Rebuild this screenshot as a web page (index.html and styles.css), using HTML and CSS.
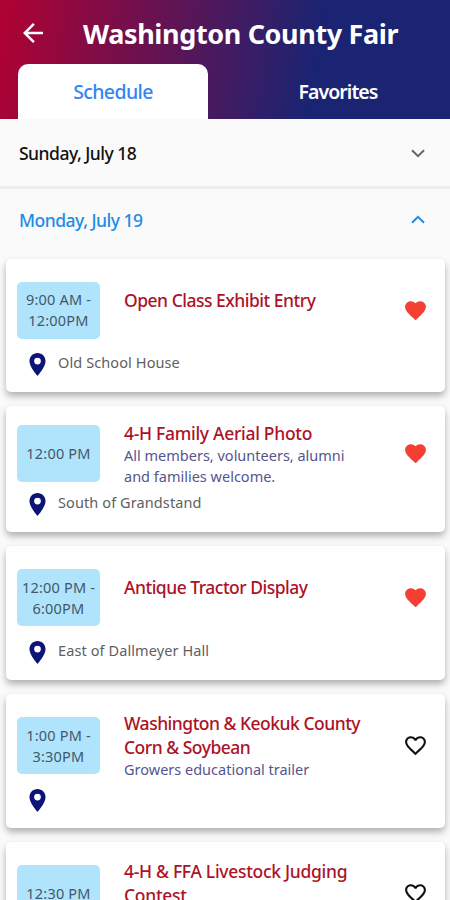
FILE: index.html
```html
<!DOCTYPE html>
<html lang="en">
<head>
    <meta charset="UTF-8">
    <meta name="viewport" content="width=device-width, initial-scale=1.0">
    <title>Washington County Fair</title>
    <link rel="stylesheet" href="styles.css">
</head>
<body>
    <!-- Icons shared by the event cards -->
    <svg class="sprite" width="0" height="0">
        <symbol id="pin" viewBox="5 2 14 20">
            <path d="M12 2C8.13 2 5 5.13 5 9c0 5.25 7 13 7 13s7-7.75 7-13c0-3.87-3.13-7-7-7zm0 9.9a2.9 2.9 0 0 1 0-5.8 2.9 2.9 0 0 1 0 5.8z"/>
        </symbol>
        <symbol id="heart" viewBox="0 0 24 24">
            <path d="M12 21.35l-1.45-1.32C5.4 15.36 2 12.28 2 8.5 2 5.42 4.42 3 7.5 3c1.74 0 3.41.81 4.5 2.09C13.09 3.81 14.76 3 16.5 3 19.58 3 22 5.42 22 8.5c0 3.78-3.4 6.86-8.55 11.54L12 21.35z"/>
        </symbol>
        <symbol id="heart-outline" viewBox="0 0 24 24">
            <path d="M16.5 3c-1.74 0-3.41.81-4.5 2.09C10.91 3.81 9.24 3 7.5 3 4.42 3 2 5.42 2 8.5c0 3.78 3.4 6.86 8.55 11.54L12 21.35l1.45-1.32C18.6 15.36 22 12.28 22 8.5 22 5.42 19.58 3 16.5 3zm-4.4 15.55l-.1.1-.1-.1C7.14 14.24 4 11.39 4 8.5 4 6.5 5.5 5 7.5 5c1.54 0 3.04.99 3.57 2.36h1.87C13.46 5.99 14.96 5 16.5 5c2 0 3.5 1.5 3.5 3.5 0 2.89-3.14 5.74-7.9 10.05z"/>
        </symbol>
    </svg>

    <header class="header">
        <div class="title-bar">
            <svg class="back" viewBox="4 4 16 16"><path d="M20 11H7.83l5.59-5.59L12 4l-8 8 8 8 1.41-1.41L7.83 13H20v-2z"/></svg>
            <h1>Washington County Fair</h1>
        </div>
        <nav class="tabs">
            <a class="tab active">Schedule</a>
            <a class="tab">Favorites</a>
        </nav>
    </header>

    <div class="day">
        <span class="day-name">Sunday, July 18</span>
        <svg class="chevron" viewBox="0 0 14 9"><path d="M1 1.2l6 6 6-6"/></svg>
    </div>
    <div class="day open">
        <span class="day-name">Monday, July 19</span>
        <svg class="chevron" viewBox="0 0 14 9"><path d="M1 7.8l6-6 6 6"/></svg>
    </div>

    <main class="events">
        <div class="card first">
            <div class="info">
                <div class="time">9:00 AM -<br>12:00PM</div>
                <div class="details">
                    <h2>Open Class Exhibit Entry</h2>
                    <p></p>
                </div>
                <svg class="fav on"><use href="#heart"/></svg>
            </div>
            <div class="location">
                <svg class="pin"><use href="#pin"/></svg>
                <span class="place">Old School House</span>
            </div>
        </div>

        <div class="card compact">
            <div class="info">
                <div class="time">12:00 PM</div>
                <div class="details">
                    <h2 class="wide">4-H Family Aerial Photo</h2>
                    <p>All members, volunteers, alumni<br>and families welcome.</p>
                </div>
                <svg class="fav on"><use href="#heart"/></svg>
            </div>
            <div class="location">
                <svg class="pin"><use href="#pin"/></svg>
                <span class="place">South of Grandstand</span>
            </div>
        </div>

        <div class="card">
            <div class="info">
                <div class="time">12:00 PM -<br>6:00PM</div>
                <div class="details">
                    <h2>Antique Tractor Display</h2>
                    <p></p>
                </div>
                <svg class="fav on"><use href="#heart"/></svg>
            </div>
            <div class="location">
                <svg class="pin"><use href="#pin"/></svg>
                <span class="place">East of Dallmeyer Hall</span>
            </div>
        </div>

        <div class="card">
            <div class="info">
                <div class="time">1:00 PM -<br>3:30PM</div>
                <div class="details">
                    <h2>Washington &amp; Keokuk County<br>Corn &amp; Soybean</h2>
                    <p>Growers educational trailer</p>
                </div>
                <svg class="fav"><use href="#heart-outline"/></svg>
            </div>
            <div class="location">
                <svg class="pin"><use href="#pin"/></svg>
            </div>
        </div>

        <div class="card">
            <div class="info">
                <div class="time">12:30 PM</div>
                <div class="details">
                    <h2 class="wide">4-H &amp; FFA Livestock Judging<br>Contest</h2>
                    <p></p>
                </div>
                <svg class="fav"><use href="#heart-outline"/></svg>
            </div>
            <div class="location">
                <svg class="pin"><use href="#pin"/></svg>
            </div>
        </div>
    </main>
</body>
</html>
```
FILE: styles.css
```css
* {
    margin: 0;
    padding: 0;
    box-sizing: border-box;
}

body {
    height: 900px;
    overflow: hidden;
    background-color: #fafafa;
    font-family: 'Noto Sans', sans-serif;
}

.sprite {
    display: block;
}

.header {
    height: 119px;
    background: linear-gradient(100deg, #ad0233 2%, #1b2472 69%);
    color: #fff;
}

.title-bar {
    display: flex;
    align-items: center;
    height: 64px;
    padding-left: 23px;
}

.back {
    width: 20px;
    height: 20px;
    margin-top: 1px;
    fill: #fff;
}

h1 {
    margin-left: 40px;
    padding-top: 2px;
    font-size: 27px;
    font-weight: 700;
    letter-spacing: -0.37px;
    white-space: nowrap;
}

.tabs {
    display: flex;
    height: 55px;
    padding-left: 18px;
}

.tab {
    display: flex;
    flex: none;
    align-items: center;
    justify-content: center;
    width: 190px;
    border-radius: 10px 10px 0 0;
    font-size: 19.5px;
    font-weight: 600;
    letter-spacing: -0.95px;
}

.tab + .tab {
    width: 242px;
    padding-left: 18px;
}

.tab.active {
    background-color: #fff;
    color: #2f86f6;
    font-weight: 500;
    letter-spacing: -0.6px;
}

.day {
    display: flex;
    align-items: center;
    justify-content: space-between;
    height: 70px;
    padding: 1px 25px 0 19px;
    border-bottom: 3px solid #eee;
    color: #111;
}

.day.open {
    height: 70px;
    padding-top: 0;
    padding-bottom: 9px;
    border-bottom: none;
    color: #1c8ce8;
}

.day-name {
    font-size: 17.5px;
    font-weight: 500;
    letter-spacing: -0.5px;
}

.chevron {
    width: 14px;
    height: 9px;
    fill: none;
    stroke: #666;
    stroke-width: 2;
}

.open .chevron {
    stroke: #1c8ce8;
}

.events {
    display: flex;
    flex-direction: column;
    gap: 14px;
    padding: 0 5px 0 6px;
}

.card {
    padding: 10px 17px 15px 11px;
    border-radius: 5px;
    background-color: #fff;
    box-shadow: 0 4px 7px rgba(0, 0, 0, 0.3);
}

.info {
    display: flex;
    align-items: center;
    height: 83px;
}

.first .info {
    height: 82px;
}

.compact .info {
    height: 75px;
}

.time {
    display: flex;
    align-items: center;
    justify-content: center;
    width: 83px;
    height: 57px;
    border-radius: 5px;
    background-color: #b0e4fd;
    color: #42586a;
    font-size: 14.5px;
    line-height: 21px;
    letter-spacing: 0.2px;
    text-align: center;
    white-space: nowrap;
}

.details {
    flex: 1;
    margin-left: 24px;
    white-space: nowrap;
}

.details h2 {
    color: #ad1227;
    font-size: 17.5px;
    font-weight: 500;
    line-height: 24px;
    letter-spacing: -0.5px;
}

.details h2.wide {
    letter-spacing: -0.3px;
}

.details p {
    min-height: 21px;
    color: #55558f;
    font-size: 14.5px;
    line-height: 21px;
}

.fav {
    width: 25px;
    height: 25px;
    fill: #111;
}

.fav.on {
    fill: #f44032;
}

.location {
    display: flex;
    align-items: center;
    height: 26px;
    padding-left: 12px;
}

.pin {
    width: 17px;
    height: 23px;
    fill: #0c1478;
}

.place {
    margin: -4px 0 0 12px;
    color: #606060;
    font-size: 14.5px;
    letter-spacing: 0.1px;
}
```
